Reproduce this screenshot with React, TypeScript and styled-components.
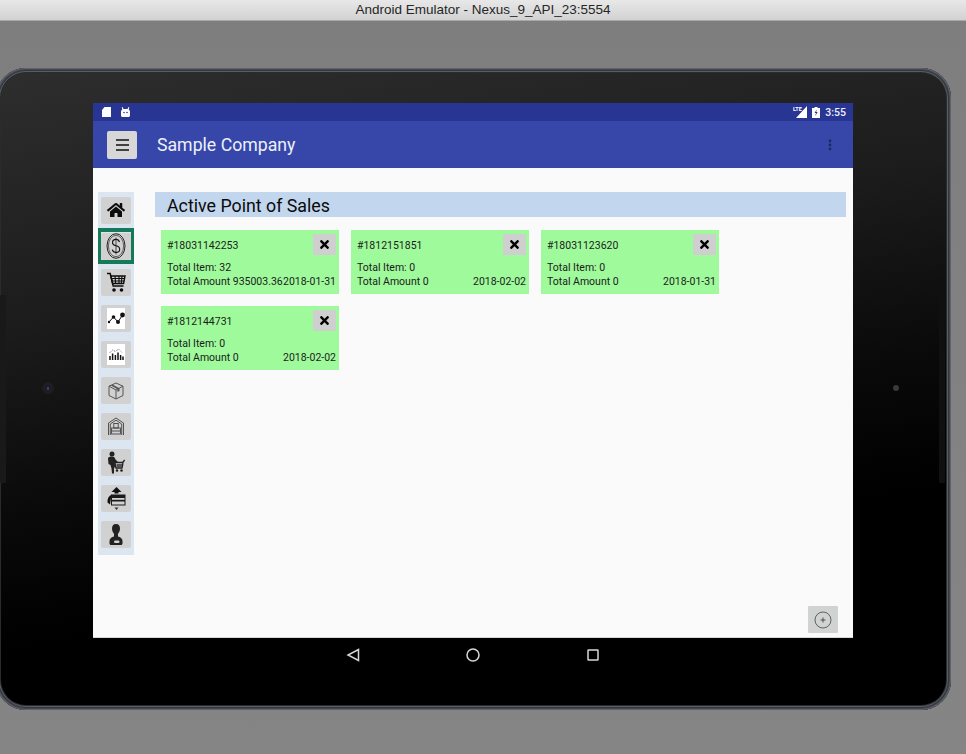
import React from "react";
import styled, { createGlobalStyle } from "styled-components";
import { FaHome, FaTimes } from "react-icons/fa";

const Global = createGlobalStyle`
  html, body { margin: 0; padding: 0; background: #808080; }
  * { box-sizing: border-box; }
  body { font-family: Roboto, "Liberation Sans", sans-serif; overflow: hidden; }
`;

const Window = styled.div`
  width: 966px; height: 754px; display: flex; flex-direction: column;
  background: linear-gradient(#7e7e7e, #858585); overflow: hidden;
`;
const TitleBar = styled.div`
  height: 21px; flex: none; display: flex; align-items: center; justify-content: center;
  background: linear-gradient(#e8e8e8, #d2d2d2); border-bottom: 1px solid #a9a9a9;
  font: 13.5px "Liberation Sans", Arial, sans-serif; color: #262626; padding-bottom: 1px;
`;
const Stage = styled.div`padding-top: 47px; flex: 1;`;
const Device = styled.div`
  position: relative; width: 955px; height: 642px; margin-left: -4px; padding: 35px 97px 0 97px;
  border-radius: 30px; display: flex; flex-direction: column;
  background: linear-gradient(170deg, #2e2e2e 0%, #1c1c1c 32%, #0a0a0a 55%, #000 72%);
  box-shadow: inset 0 0 0 1px #5e626a, inset 0 0 0 2px #44474e, inset 0 0 0 3px #34363c, inset 0 0 0 4px #5a5d64, inset 0 0 0 5px #2a2b2f;
`;
const Camera = styled.span<{ $x: number; $size: number; $color: string }>`
  position: absolute; top: 320px; left: ${p => p.$x}px; width: ${p => p.$size}px; height: ${p => p.$size}px;
  margin-top: -${p => p.$size / 2}px; border-radius: 50%; background: ${p => p.$color};
  display: flex; align-items: center; justify-content: center;
`;
const Lens = styled.span`width: 2px; height: 3px; background: #2b3f8f; display: block;`;
const SideStrip = styled.span<{ $x: number; $color: string }>`
  position: absolute; top: 227px; height: 188px; width: 6px; left: ${p => p.$x}px; background: ${p => p.$color};
  border-radius: 1px;
`;
const Screen = styled.div`
  flex: none; width: 760px; height: 535px; display: flex; flex-direction: column;
  background: #fafafa; border-bottom: 1px solid #d8d8d8; position: relative;
`;
const StatusBar = styled.div`
  height: 18px; flex: none; background: #283593; display: flex; align-items: center;
  justify-content: space-between; padding: 0 7px 0 9px; color: #fff;
`;
const StatusGroup = styled.div<{ $gap: number }>`display: flex; align-items: center; gap: ${p => p.$gap}px;`;
const Clock = styled.span`font-size: 10.5px; font-weight: 500; color: #eef0fa;`;
const Toolbar = styled.div`
  height: 47px; flex: none; background: #3647a9; display: flex; align-items: center;
  padding: 1px 21px 0 14px; color: #eef0fa;
`;
const MenuButton = styled.div`
  width: 30px; height: 28px; flex: none; background: #d6d7d6; border-radius: 2px; margin-top: -1px;
  display: flex; align-items: center; justify-content: center;
`;
const AppTitle = styled.div`margin-left: 20px; font-size: 17.7px; flex: 1;`;
const Body = styled.div`
  flex: 1; display: flex; align-items: flex-start; padding: 24px 7px 0 5px; gap: 21px;
`;
const Sidebar = styled.div`
  width: 36px; flex: none; background: #dce6f1; padding: 0 0 2px; display: flex; flex-direction: column;
`;
const SideItem = styled.div<{ $active?: boolean }>`
  height: 36.1px; display: flex; align-items: center; justify-content: center;
  border: ${p => (p.$active ? "3px solid #157a5a" : "none")};
  border-top-width: ${p => (p.$active ? "4px" : "0")};
  border-bottom-width: ${p => (p.$active ? "4px" : "0")};
`;
const SideButton = styled.div`
  width: 30px; height: 27px; background: #d0d1d0; border-radius: 2px;
  display: flex; align-items: center; justify-content: center;
`;
const Main = styled.div`flex: 1; min-width: 0;`;
const Heading = styled.div`
  height: 25px; background: #c2d6ee; font-size: 17.8px; line-height: 25px; padding: 1px 0 0 12px; color: #0a0a0a;
`;
const CardGrid = styled.div`
  margin: 13px 0 0 6px; display: grid; grid-template-columns: repeat(3, 178px); grid-auto-rows: 64px; gap: 12px;
`;
const Card = styled.div`
  background: #9ffa9b; padding: 4px 3px 0 6px; display: flex; flex-direction: column; color: #1c1c1c;
  font-size: 10.5px;
`;
const CardTop = styled.div`display: flex; align-items: center; justify-content: space-between; height: 21px; margin-bottom: 6px;`;
const CardId = styled.span`padding-top: 1px;`;
const CloseButton = styled.div`
  width: 23px; height: 21px; background: #cfcfcf; display: flex; align-items: center; justify-content: center; color: #000;
`;
const CardLine = styled.div`display: flex; justify-content: space-between; height: 14px; line-height: 14px; white-space: nowrap;`;
const Fab = styled.div`
  position: absolute; right: 15px; bottom: 4px; width: 30px; height: 27px; background: #d0d3d1; border-radius: 1px;
  display: flex; align-items: center; justify-content: center;
`;
const NavBar = styled.div`
  flex: none; height: 36px; width: 760px; display: flex; align-items: center; justify-content: center; gap: 104px; padding-bottom: 2px;
`;
const Ico = styled.svg`display: block; flex: none;`;

const Dollar = () => (
  <Ico width="20" height="26" viewBox="0 0 20 26" fill="none" stroke="#111">
    <ellipse cx="10" cy="13" rx="9" ry="12.300" strokeWidth="0.9" />
    <ellipse cx="10" cy="13" rx="7.600" ry="10.700" strokeWidth="0.6" />
    <path d="M13.500 9c-.6-1.800-2-2.600-3.500-2.600-2 0-3.500 1.200-3.500 3.100s1.400 2.800 3.500 3.300c2.100.5 3.700 1.400 3.700 3.400s-1.600 3.200-3.700 3.200c-1.800 0-3.200-1-3.800-2.800" strokeWidth="1.100" />
    <path d="M10 4.500v17" strokeWidth="0.7" />
  </Ico>
);
const Cart = () => (
  <Ico width="20" height="21" viewBox="0 0 20 21" fill="none" stroke="#0c0c0c">
    <path d="M1 1.500h3.200l3 12.500h10.300" strokeWidth="1.500" />
    <path d="M4.800 4H19l-1.400 7.500H6.600z" strokeWidth="1.400" />
    <path d="M9 4l.6 7.500M13 4v7.500M16 4l-.7 7.500M5.300 6.500h13.200M5.900 9h12.200" strokeWidth="1.100" />
    <circle cx="8" cy="18" r="1.800" fill="#0c0c0c" stroke="none" />
    <circle cx="15.500" cy="18" r="1.800" fill="#0c0c0c" stroke="none" />
  </Ico>
);
const Trend = () => (
  <Ico width="18" height="21" viewBox="0 0 18 21">
    <rect width="18" height="21" fill="#fff" />
    <path d="M2 14l4.500-5 4.500 5 4.500-7" fill="none" stroke="#111" strokeWidth="1" />
    <circle cx="2" cy="14" r="1.200" fill="#111" />
    <circle cx="6.500" cy="9" r="1.800" fill="#111" />
    <circle cx="11" cy="14" r="2" fill="#111" />
    <circle cx="15.500" cy="7" r="2.400" fill="#111" />
  </Ico>
);
const Bars = () => (
  <Ico width="18" height="21" viewBox="0 0 18 21">
    <rect width="18" height="21" fill="#fff" />
    <path d="M3 16v-4M5.600 16v-6.500M8.400 16v-5M11 16v-7.500M13.600 16v-5M16 16v-3.500" stroke="#111" strokeWidth="1.500" />
    <path d="M2.500 9l3-3 3 1.500 3-2.500 3.500 3.500" stroke="#444" strokeWidth="0.8" strokeDasharray="1 1" fill="none" />
  </Ico>
);
const Box = () => (
  <Ico width="18" height="18" viewBox="0 0 18 18" fill="none" stroke="#555" strokeWidth="1">
    <path d="M9 1l7 3.200v9.300L9 17l-7-3.500V4.200z" />
    <path d="M2 4.200L9 8l7-3.800M9 8v9" />
    <path d="M5.500 2.600l7 3.700v2.600l-2 1V7.300L3.800 3.500z" fill="#555" stroke="none" />
  </Ico>
);
const Warehouse = () => (
  <Ico width="16" height="19" viewBox="0 0 16 19" fill="none" stroke="#444" strokeWidth="0.9">
    <path d="M.5 18V6L8 1l7.500 5v12" />
    <path d="M2.300 18V7L8 3.200 13.700 7v11" />
    <rect x="5.800" y="6.500" width="4.400" height="4.500" />
    <rect x="3.600" y="11" width="8.800" height="6" />
    <path d="M3.600 14h8.800" />
  </Ico>
);
const Shopper = () => (
  <Ico width="19" height="24" viewBox="0 0 19 24">
    <circle cx="5" cy="3" r="2.500" fill="#222" />
    <path d="M1 7.500C1 6 3 5.500 5 5.500S8 6.500 8.500 8.500L11 11H7.800L8 15.500l-1 2v5H5l-.5-5-1-3.500-2-1z" fill="#222" />
    <path d="M6.500 11.500h9.300l1.800-2.500M8 12l1 5h6l1-5" fill="none" stroke="#222" strokeWidth="1.300" />
    <path d="M9.500 13h5.500v3H9.500z" fill="#555" />
    <circle cx="10" cy="19.500" r="1.300" fill="#222" />
    <circle cx="14.500" cy="19.500" r="1.300" fill="#222" />
  </Ico>
);
const CardIcon = () => (
  <Ico width="19" height="24" viewBox="0 0 19 24">
    <path d="M9.500 0l5 5h-10z" fill="#111" />
    <path d="M7.500 4.500h4v2h-4z" fill="#111" />
    <path d="M4.500 7.500C1.500 9 .2 12 .5 15.500l2.500 2z" fill="#111" />
    <rect x="4" y="7.500" width="14.500" height="11" fill="#1a1a1a" />
    <rect x="5" y="11" width="12.500" height="1.800" fill="#d0d1d0" />
    <rect x="5" y="14.500" width="12.500" height="3" fill="#d0d1d0" />
    <path d="M7.500 20.500h4L9.500 23z" fill="#333" />
  </Ico>
);
const User = () => (
  <Ico width="14" height="21" viewBox="0 0 14 21">
    <path d="M7 0c2.800 0 4 2 4 4.500 0 2.300-.9 4.200-2 5.300v2.700c2.200.6 4.500 2 4.500 4.500v2.500c0 .8-.7 1.500-1.500 1.500H2c-.8 0-1.500-.7-1.500-1.500V17c0-2.500 2.300-3.900 4.500-4.500V9.800C3.900 8.700 3 6.800 3 4.500 3 2 4.200 0 7 0z" fill="#222" />
    <rect x="5" y="16.500" width="5.500" height="2.500" rx="1.200" fill="#d0d1d0" />
  </Ico>
);

const sideIcons: React.ReactNode[] = [
  <FaHome key="h" size={18} color="#0c0c0c" />, <Dollar key="d" />, <Cart key="c" />, <Trend key="t" />, <Bars key="b" />,
  <Box key="x" />, <Warehouse key="w" />, <Shopper key="s" />, <CardIcon key="ci" />, <User key="u" />,
];

const cards = [
  { id: "#18031142253", items: "32", amount: "935003.36", date: "2018-01-31" },
  { id: "#1812151851", items: "0", amount: "0", date: "2018-02-02" },
  { id: "#18031123620", items: "0", amount: "0", date: "2018-01-31" },
  { id: "#1812144731", items: "0", amount: "0", date: "2018-02-02" },
];

export default function App() {
  return (
    <Window>
      <Global />
      <TitleBar>Android Emulator - Nexus_9_API_23:5554</TitleBar>
      <Stage>
        <Device>
          <Camera $x={46} $size={12} $color="#1e1e1e"><Lens /></Camera>
          <Camera $x={897} $size={6} $color="#3a3a3a" />
          <SideStrip $x={4} $color="#191919" />
          <SideStrip $x={943} $color="#101010" />
          <Screen>
            <StatusBar>
              <StatusGroup $gap={10}>
                <Ico width="9" height="10" viewBox="0 0 9 10"><path d="M2.500 0H9v10H0V3z" fill="#fff" /></Ico>
                <Ico width="9" height="10" viewBox="0 0 9 10"><path d="M1.500 0l1 2h4l1-2 .8.600L7.700 2.600C8.500 3.200 9 4 9 5v3.500c0 .8-.7 1.500-1.500 1.500h-6C.7 10 0 9.300 0 8.500V5c0-1 .5-1.800 1.300-2.400L.7.600z" fill="#fff" /><circle cx="3" cy="5.500" r=".8" fill="#283593" /><circle cx="6" cy="5.500" r=".8" fill="#283593" /></Ico>
              </StatusGroup>
              <StatusGroup $gap={5}>
                <Ico width="14" height="12" viewBox="0 0 14 12"><path d="M14 0v12H3z" fill="#fff" /><text x="0" y="5" fontSize="5.500" fontWeight="700" fill="#fff" fontFamily="Roboto">LTE</text></Ico>
                <Ico width="8" height="11" viewBox="0 0 8 11"><path d="M2.500 0h3v1H8v10H0V1h2.500z" fill="#fff" /><path d="M4.800 2.500L2.500 6h1.500L3.200 9 5.700 5H4.200z" fill="#283593" /></Ico>
                <Clock>3:55</Clock>
              </StatusGroup>
            </StatusBar>
            <Toolbar>
              <MenuButton>
                <Ico width="13" height="12" viewBox="0 0 13 12"><path d="M0 1h13M0 6h13M0 11h13" stroke="#111" strokeWidth="1.300" /></Ico>
              </MenuButton>
              <AppTitle>Sample Company</AppTitle>
              <Ico width="4" height="12" viewBox="0 0 4 12"><circle cx="2" cy="2" r="1.400" fill="#20295f" /><circle cx="2" cy="6" r="1.400" fill="#20295f" /><circle cx="2" cy="10" r="1.400" fill="#20295f" /></Ico>
            </Toolbar>
            <Body>
              <Sidebar>
                {sideIcons.map((icon, i) => (
                  <SideItem key={i} $active={i === 1}>
                    <SideButton>{icon}</SideButton>
                  </SideItem>
                ))}
              </Sidebar>
              <Main>
                <Heading>Active Point of Sales</Heading>
                <CardGrid>
                  {cards.map(c => (
                    <Card key={c.id}>
                      <CardTop>
                        <CardId>{c.id}</CardId>
                        <CloseButton><FaTimes size={13} /></CloseButton>
                      </CardTop>
                      <CardLine>Total Item: {c.items}</CardLine>
                      <CardLine>
                        <span>Total Amount {c.amount}</span>
                        <span>{c.date}</span>
                      </CardLine>
                    </Card>
                  ))}
                </CardGrid>
              </Main>
            </Body>
            <Fab>
              <Ico width="18" height="18" viewBox="0 0 18 18" fill="none" stroke="#444">
                <circle cx="9" cy="9" r="8" strokeWidth="0.8" />
                <path d="M6.500 9h5M9 6.500v5" strokeWidth="0.9" />
              </Ico>
            </Fab>
          </Screen>
          <NavBar>
            <Ico width="16" height="16" viewBox="0 0 16 16" fill="none" stroke="#d8d8d8" strokeWidth="1.500"><path d="M13.500 2.500v11L3 8z" /></Ico>
            <Ico width="16" height="16" viewBox="0 0 16 16" fill="none" stroke="#d8d8d8" strokeWidth="1.500"><circle cx="8" cy="8" r="6" /></Ico>
            <Ico width="16" height="16" viewBox="0 0 16 16" fill="none" stroke="#d8d8d8" strokeWidth="1.500"><rect x="3" y="3" width="10" height="10" rx="0.5" /></Ico>
          </NavBar>
        </Device>
      </Stage>
    </Window>
  );
}
